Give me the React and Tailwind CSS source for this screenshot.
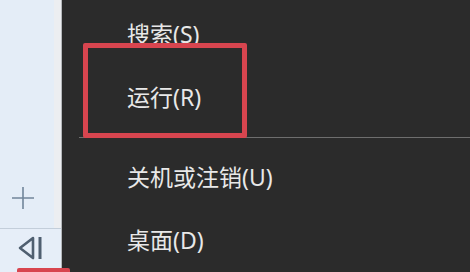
const items = [
  { id: "s", label: "搜索(S)" },
  { id: "r", label: "运行(R)" },
];

const lower = [
  { id: "u", label: "关机或注销(U)" },
  { id: "d", label: "桌面(D)" },
];

function MenuItem({ label }) {
  return (
    <div className="h-[63px] flex items-center pl-[65px] text-[23px] leading-none text-[#e8e8e8]">
      {label}
    </div>
  );
}

export default function App() {
  return (
    <div
      className="relative w-[470px] h-[272px] overflow-hidden flex bg-[#2b2b2b]"
      style={{ fontFamily: '"Noto Sans", "Noto Sans CJK SC", sans-serif' }}
    >
      {/* left taskbar strip */}
      <div className="w-[62px] h-full flex flex-col bg-[#e4edf7] border-r border-[#b5b8bb]">
        <div className="flex-1 flex">
          <div className="w-[55px] flex flex-col justify-end items-center pb-[18px]">
            <svg width="24" height="24" viewBox="0 0 24 24" className="ml-[-8px]">
              <path d="M12 1v22M1 12h22" stroke="#71859a" strokeWidth="1.6" />
            </svg>
          </div>
          <div className="w-[7px] bg-[#eceef1]" />
        </div>
        <div className="h-[44px] border-t border-[#c3ceda] bg-[#e6eef8] flex items-start pt-[7px] pl-[17px]">
          <svg width="26" height="24" viewBox="0 0 26 24">
            <path d="M16 2 L3 12 L16 22 Z" fill="none" stroke="#4f5f70" strokeWidth="2.6" strokeLinejoin="round" />
            <path d="M23 1v22" stroke="#4f5f70" strokeWidth="3" />
          </svg>
        </div>
      </div>

      {/* context menu */}
      <div className="flex-1 flex flex-col pt-[3px]">
        {items.map((it) => (
          <MenuItem key={it.id} label={it.label} />
        ))}
        <div className="ml-[17px] mt-[8px] mb-[9px] h-px bg-[#6e6e6e]" />
        {lower.map((it) => (
          <MenuItem key={it.id} label={it.label} />
        ))}
      </div>

      {/* highlight annotation */}
      <div className="absolute left-[83px] top-[43px] w-[164px] h-[95px] border-[5px] border-[#d8454f] rounded-[2px]" />
      <div className="absolute left-[17px] top-[268px] w-[53px] h-[4px] bg-[#d8454f] rounded-t-[2px]" />
    </div>
  );
}
